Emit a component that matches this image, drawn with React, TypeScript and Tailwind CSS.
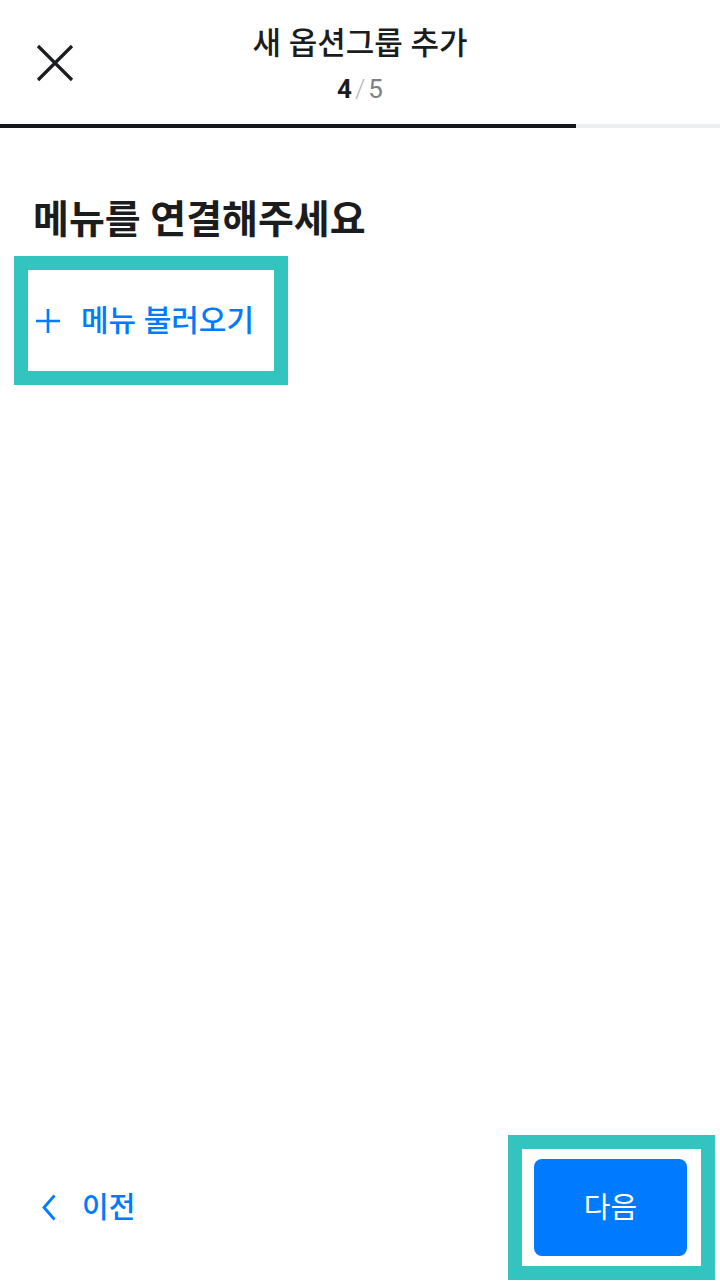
const font = { fontFamily: "Roboto, 'Noto Sans CJK KR', sans-serif" };

const CloseIcon = () => (
  <svg width="38" height="38" viewBox="0 0 38 38" fill="none">
    <path d="M2 2L36 36M36 2L2 36" stroke="#1b1c1e" strokeWidth="3.2" />
  </svg>
);

const PlusIcon = () => (
  <svg width="26" height="26" viewBox="0 0 26 26" fill="none">
    <path d="M13 1V25M1 13H25" stroke="#007aff" strokeWidth="2.6" />
  </svg>
);

const ChevronLeft = () => (
  <svg width="14" height="27" viewBox="0 0 14 27" fill="none">
    <path d="M12.5 1.5L2 13.5L12.5 25.5" stroke="#007aff" strokeWidth="2.8" />
  </svg>
);

export default function App() {
  return (
    <div
      className="h-[1288px] w-[720px] flex flex-col bg-white text-[#1b1c1e]"
      style={font}
    >
      <header className="h-[124px] grid grid-cols-[1fr_auto_1fr]">
        <div className="flex items-start pl-[36px] pt-[44px]">
          <button className="w-[38px] h-[38px]">
            <CloseIcon />
          </button>
        </div>
        <div className="flex flex-col items-center pt-[25px]">
          <h1 className="text-[31px] leading-[38px] font-medium">
            새 옵션그룹 추가
          </h1>
          <div className="mt-[10px] flex items-center gap-[3px] text-[26px] leading-[32px]">
            <span className="font-bold text-[#1b1c1e]">4</span>
            <span className="text-[#b5b7ba] font-light">/</span>
            <span className="text-[#7d8085]">5</span>
          </div>
        </div>
        <div />
      </header>

      <div className="h-[4px] w-full bg-[#eceeef]">
        <div className="h-full w-[576px] bg-[#17181a]" />
      </div>

      <main className="flex-1 flex flex-col">
        <h2 className="mt-[68px] pl-[33px] text-[39px] leading-[48px] font-bold">
          메뉴를 연결해주세요
        </h2>
        <div className="mt-[12px] ml-[14px] w-[274px] h-[129px] border-[14px] border-[#33c4bf] flex items-center">
          <button className="flex items-center gap-[20px] pl-[7px] text-[30px] leading-[38px] font-medium text-[#007aff]">
            <PlusIcon />
            <span>메뉴 불러오기</span>
          </button>
        </div>
      </main>

      <footer className="flex items-center justify-between pb-[8px] pr-[5px]">
        <button className="flex items-center gap-[26px] pl-[42px] text-[29px] leading-[36px] font-medium text-[#007aff]">
          <ChevronLeft />
          <span>이전</span>
        </button>
        <div className="w-[207px] h-[145px] border-[14px] border-[#33c4bf] flex items-center pl-[12px]">
          <button className="w-[153px] h-[97px] rounded-[8px] bg-[#007aff] text-white text-[29px] leading-[36px]">
            다음
          </button>
        </div>
      </footer>
    </div>
  );
}
